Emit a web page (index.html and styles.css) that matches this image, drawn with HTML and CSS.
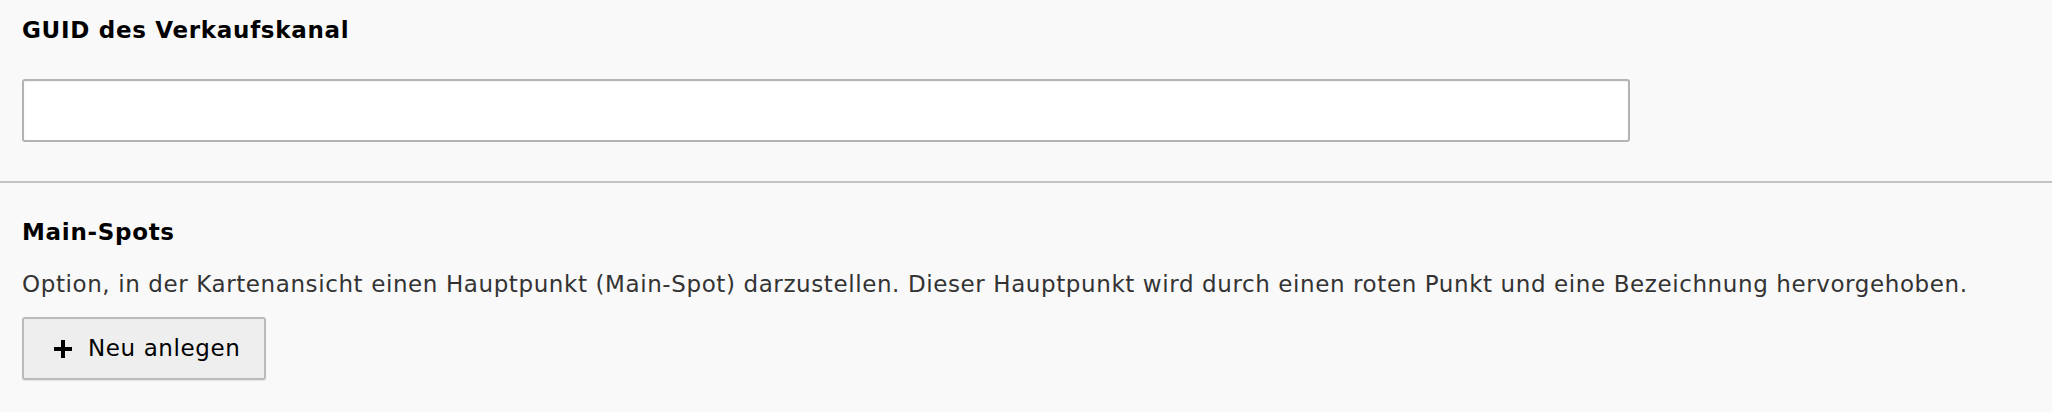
FILE: index.html
```html
<!DOCTYPE html>
<html lang="de">
<head>
  <meta charset="UTF-8" />
  <meta name="viewport" content="width=device-width, initial-scale=1.0"/>
  <title>Verkaufskanal</title>
  <link rel="stylesheet" href="styles.css">
</head>
<body>

  <!-- GUID field -->
  <div class="field">
    <label class="field-label" for="guid">GUID des Verkaufskanal</label>
    <input class="field-input" id="guid" type="text">
  </div>

  <!-- Main-Spots -->
  <div class="field">
    <h2 class="field-label">Main-Spots</h2>
    <p class="field-desc">Option, in der Kartenansicht einen Hauptpunkt (Main-Spot) darzustellen. Dieser Hauptpunkt wird durch einen roten Punkt und eine Bezeichnung hervorgehoben.</p>
    <button class="btn" type="button">
      <svg class="btn-icon" viewBox="0 0 20 20" width="20" height="20" aria-hidden="true">
        <path d="M8 1h4v7h7v4h-7v7h-4v-7h-7v-4h7z" fill="#000"/>
      </svg>
      Neu anlegen
    </button>
  </div>

</body>
</html>
```

FILE: styles.css
```css
/* === PAGE === */
body {
  font-family: "DejaVu Sans", "Liberation Sans", sans-serif;
  font-size: 23px;
  line-height: 27px;
  letter-spacing: 0.6px;
  margin: 0;
  background: #f9f9f9;
  color: #000;
}

/* === FIELDS === */
.field {
  padding: 17px 22px 39px;
}

.field + .field {
  border-top: 2px solid #c3c3c3;
  padding-top: 36px;
}

.field-label {
  display: block;
  margin: 0;
  font-size: 23px;
  font-weight: bold;
  line-height: 27px;
  letter-spacing: 0.7px;
}

.field-input {
  display: block;
  box-sizing: border-box;
  width: 1608px;
  height: 63px;
  margin-top: 35px;
  padding: 0 14px;
  font: inherit;
  background: #fff;
  border: 2px solid #b3b3b3;
  border-radius: 3px;
  box-shadow: inset 0 1px 2px rgba(0, 0, 0, 0.06);
}

.field-desc {
  margin: 25px 0 19px;
  color: #333;
}

/* === BUTTON === */
.btn {
  display: inline-flex;
  align-items: center;
  gap: 15px;
  box-sizing: border-box;
  height: 63px;
  padding: 0 24px 0 29px;
  font: inherit;
  letter-spacing: inherit;
  color: #000;
  background: #eeeeee;
  border: 2px solid #bbbbbb;
  border-radius: 3px;
  box-shadow: 0 1px 1px rgba(0, 0, 0, 0.08);
}

.btn-icon {
  flex: none;
}
```
